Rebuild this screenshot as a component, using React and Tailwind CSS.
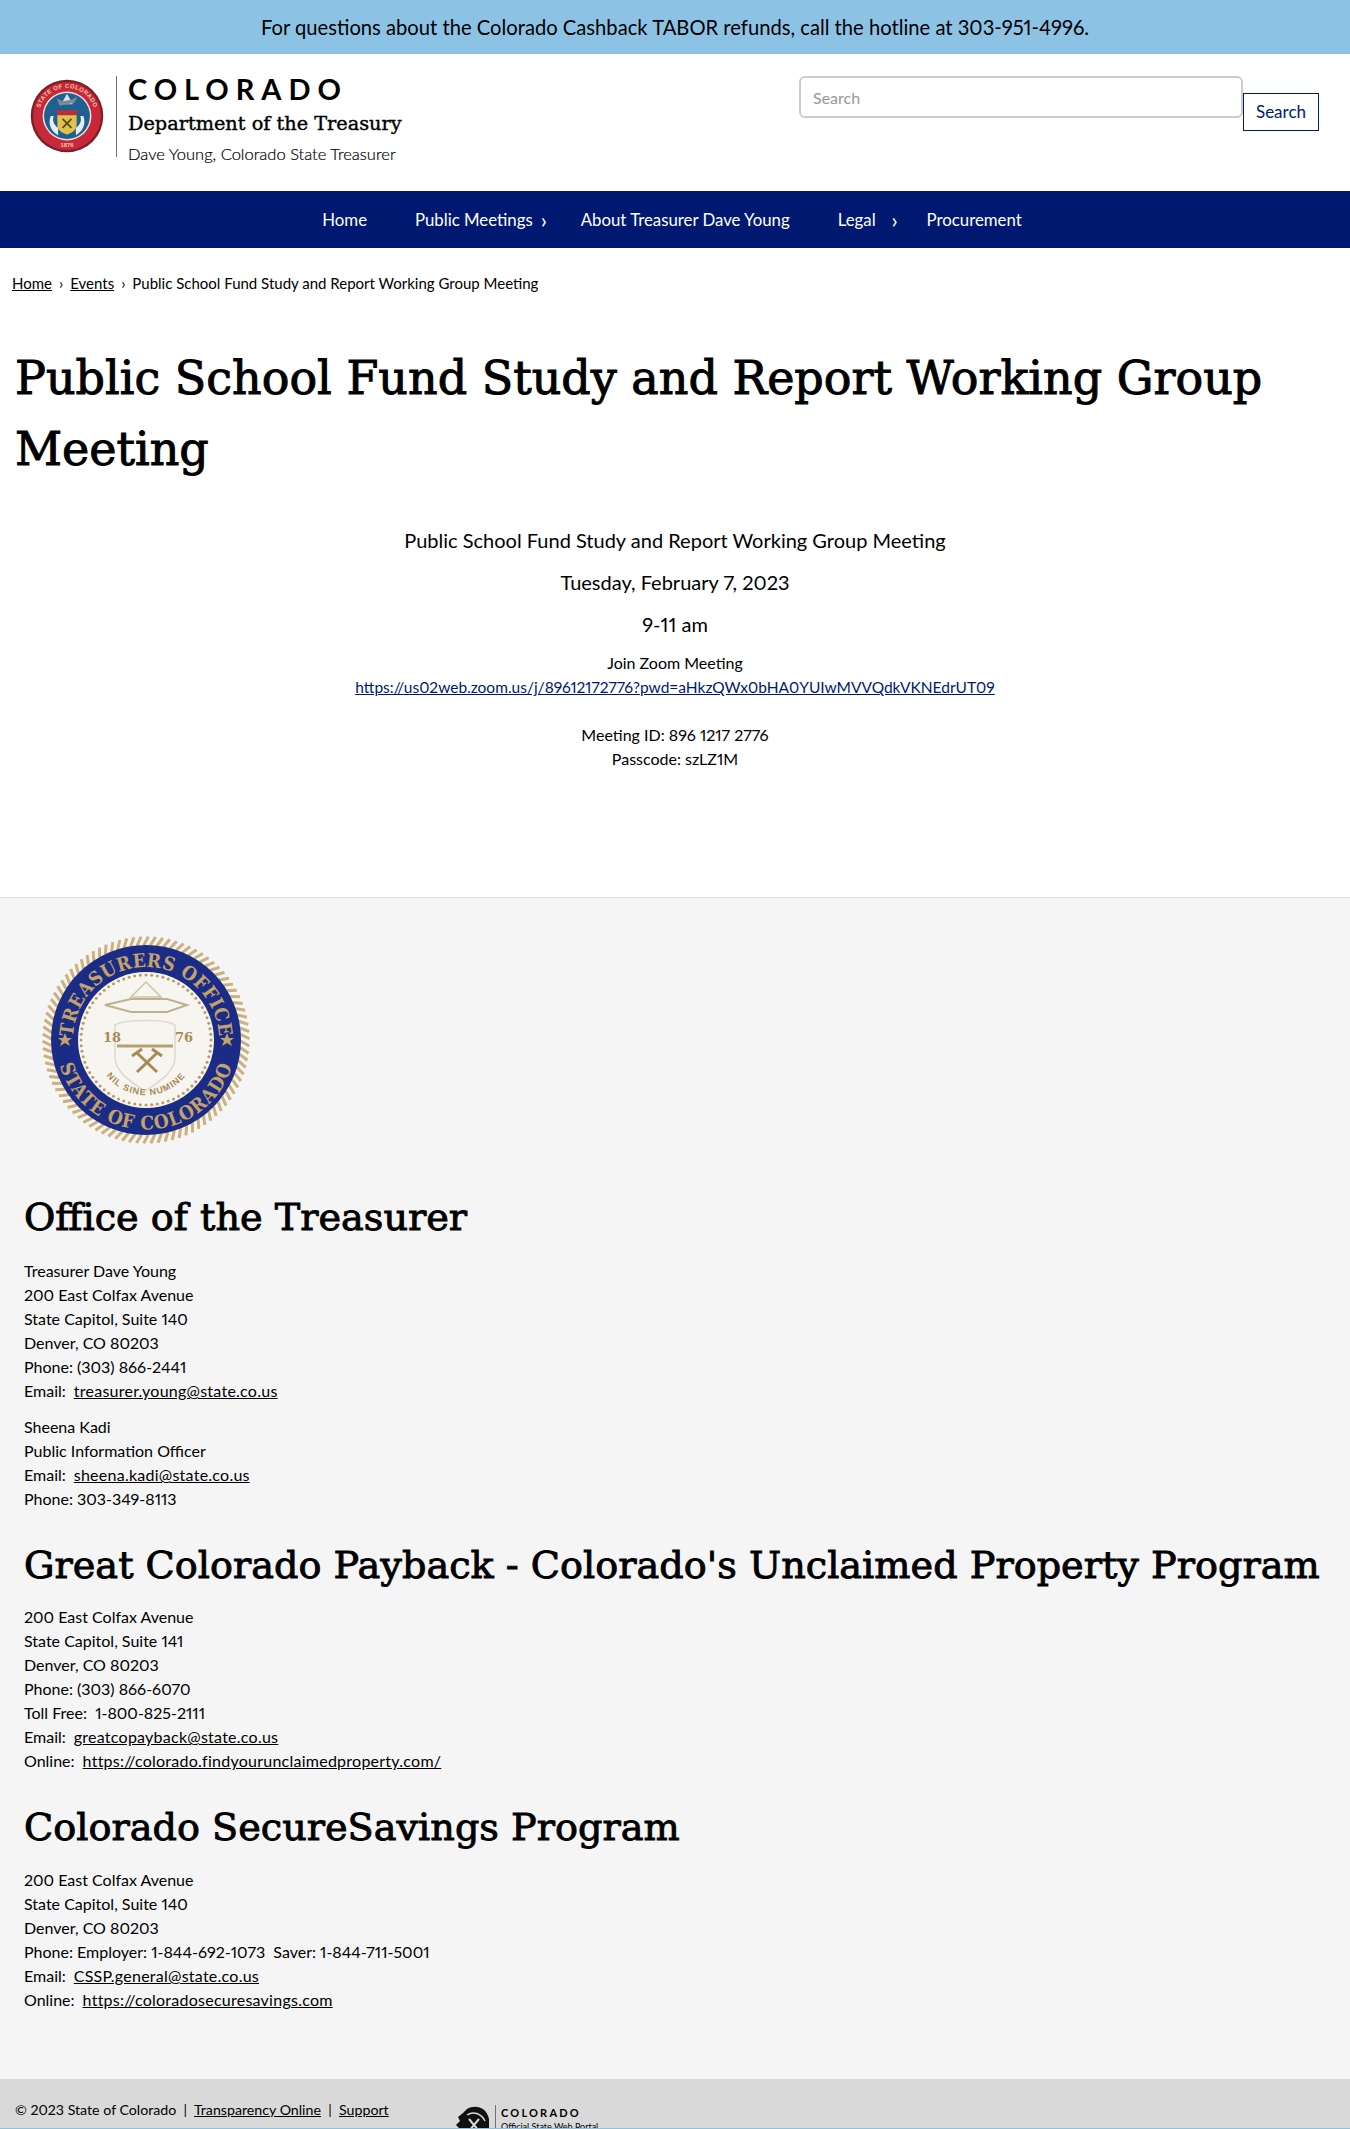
import React from 'react';

const body = { fontFamily: 'Lato, sans-serif' };
const slab = { fontFamily: '"DejaVu Serif", serif' };
const slabCond = { fontFamily: '"DejaVu Serif Condensed", "DejaVu Serif", serif' };

const Crumb = ({ children }) => <a className="underline text-black">{children}</a>;
const MailLink = ({ children }) => <a className="underline tracking-[0.25px] ml-[8px]">{children}</a>;

const StateSeal = () => (
  <svg width="74" height="74" viewBox="0 0 100 100">
    <circle cx="50" cy="50" r="49" fill="#7a1f25" />
    <circle cx="50" cy="50" r="46" fill="#c8283a" />
    <circle cx="50" cy="50" r="33" fill="#e9e4d6" />
    <circle cx="50" cy="50" r="31" fill="#1f5f92" />
    <path d="M50 20 L58 34 L42 34 Z" fill="#dfe3e8" />
    <path d="M40 36 L60 32 L64 24 L56 28 L44 30 L36 26 Z" fill="#7a8a96" />
    <rect x="36" y="42" width="28" height="7" fill="#b4303c" />
    <path d="M37 49 H63 V62 C63 70 55 73 50 75 C45 73 37 70 37 62 Z" fill="#e3c24a" />
    <path d="M44 54 L56 66 M56 54 L44 66" stroke="#5a4a20" strokeWidth="2.5" />
    <path d="M28 50 C24 60 28 70 38 76 L38 66 C32 62 30 56 32 50 Z" fill="#e6eef2" />
    <path d="M72 50 C76 60 72 70 62 76 L62 66 C68 62 70 56 68 50 Z" fill="#e6eef2" />
    <path id="ss-top" d="M12 50 A38 38 0 0 1 88 50" fill="none" />
    <text fontSize="8" fontWeight="700" fill="#f1c9a8" letterSpacing="0.6" style={{ fontFamily: '"Liberation Sans", sans-serif' }}>
      <textPath href="#ss-top" startOffset="50%" textAnchor="middle">STATE OF COLORADO</textPath>
    </text>
    <text x="50" y="92" textAnchor="middle" fontSize="8" fontWeight="700" fill="#f1c9a8" style={{ fontFamily: '"Liberation Sans", sans-serif' }}>1876</text>
  </svg>
);

const TreasurerSeal = () => {
  const dots = Array.from({ length: 72 }, (_, i) => (i / 72) * Math.PI * 2);
  const rope = Array.from({ length: 90 }, (_, i) => (i / 90) * 360);
  return (
    <svg width="210" height="210" viewBox="0 0 210 210">
      {rope.map((a) => (
        <rect key={a} x="103.5" y="1" width="3" height="10" fill="#cdb07c" transform={`rotate(${a} 105 105) rotate(28 105 6)`} />
      ))}
      <circle cx="105" cy="105" r="95" fill="#1b2c86" />
      <circle cx="105" cy="105" r="68" fill="#f7f5ef" />
      {dots.map((a, i) => (
        <circle key={i} cx={105 + 65 * Math.cos(a)} cy={105 + 65 * Math.sin(a)} r="1.5" fill="#b99a68" />
      ))}
      <path id="ts-top" d="M36.4 130 A73 73 0 1 1 173.6 130" fill="none" />
      <path id="ts-bot" d="M20.4 74 A90 90 0 1 0 189.6 74" fill="none" />
      <text fontSize="19" fontWeight="700" fill="#c4a26a" letterSpacing="0.5" style={slabCond}>
        <textPath href="#ts-top" startOffset="50%" textAnchor="middle">TREASURERS OFFICE</textPath>
      </text>
      <text fontSize="19" fontWeight="700" fill="#c4a26a" letterSpacing="1" style={slabCond}>
        <textPath href="#ts-bot" startOffset="50%" textAnchor="middle">STATE OF COLORADO</textPath>
      </text>
      <path d="M24 98 l2 5 5 0 -4 3 2 5 -5 -3 -5 3 2 -5 -4 -3 5 0 Z" fill="#c4a26a" />
      <path d="M186 98 l2 5 5 0 -4 3 2 5 -5 -3 -5 3 2 -5 -4 -3 5 0 Z" fill="#c4a26a" />
      <path d="M105 47 L120 62 H90 Z" fill="none" stroke="#cfc4ab" strokeWidth="1.5" />
      <path d="M64 70 L90 64 H126 L146 70 L126 77 H90 Z" fill="none" stroke="#bfb08f" strokeWidth="2" />
      <path d="M74 90 C84 84 124 84 134 90 V122 C134 138 116 148 104 156 C92 148 74 138 74 122 Z" fill="none" stroke="#e0d9c8" strokeWidth="1.5" />
      <path d="M76 111 H132" stroke="#b79f70" strokeWidth="3" />
      <path d="M96 118 L116 137 M116 118 L96 137 M91 121 L101 114 M111 114 L121 121" stroke="#a88a58" strokeWidth="3" />
      <text x="62" y="107" fontSize="13" fontWeight="700" fill="#a88a58" style={slab}>18</text>
      <text x="134" y="107" fontSize="13" fontWeight="700" fill="#a88a58" style={slab}>76</text>
      <path id="ts-motto" d="M60 132 A50 50 0 0 0 150 132" fill="none" />
      <text fontSize="9" fontWeight="700" fill="#a88a58" letterSpacing="1" style={{ fontFamily: '"Liberation Sans", sans-serif' }}>
        <textPath href="#ts-motto" startOffset="50%" textAnchor="middle">NIL SINE NUMINE</textPath>
      </text>
    </svg>
  );
};

const PortalMark = () => (
  <svg width="36" height="32" viewBox="0 0 36 32">
    <path d="M3 12 L8 8 L12 4 C20 -1 32 2 34 14 L34 32 H2 L5 24 L1 20 L5 16 Z" fill="#111" />
    <path d="M14 14 L24 26 M24 14 L14 26" stroke="#d9d9d9" strokeWidth="2" />
    <path d="M12 10 C18 6 26 8 30 16" stroke="#d9d9d9" strokeWidth="1.5" fill="none" />
  </svg>
);

const FooterTitle = ({ children }) => (
  <h2 className="text-[38.2px] leading-[48px] font-normal text-black [-webkit-text-stroke:0.9px_black] whitespace-nowrap" style={slab}>{children}</h2>
);

export default function App() {
  return (
    <div className="w-[1350px] h-[2129px] overflow-hidden bg-white text-black text-[16px] leading-6 proportional-nums" style={body}>
      {/* Alert banner */}
      <div className="h-[54px] bg-[#8cc3e5] flex items-center justify-center text-[20.2px]">
        For questions about the Colorado Cashback TABOR refunds, call the hotline at 303-951-4996.
      </div>

      {/* Header */}
      <header className="h-[137px] flex justify-between pt-[22px] pl-[30px] pr-[31px]">
        <div className="flex items-start">
          <div className="pt-[3px]"><StateSeal /></div>
          <div className="ml-[12px] border-l border-gray-500 pl-[11px] h-[81px]">
            <div className="text-[29px] leading-[26px] font-bold tracking-[0.24em]">COLORADO</div>
            <div className="mt-[8px] text-[19.3px] leading-[28px] font-normal [-webkit-text-stroke:0.4px_black]" style={slab}>Department of the Treasury</div>
            <div className="mt-[4px] text-[16.5px] leading-[24px] font-light [-webkit-text-stroke:0.2px_black]">Dave Young, Colorado State Treasurer</div>
          </div>
        </div>
        <div className="flex items-start">
          <input
            placeholder="Search"
            className="w-[444px] h-[42px] border-2 border-[#cccccc] rounded-md px-3 placeholder:text-[#999999] outline-none"
          />
          <button className="mt-[17px] h-[38px] w-[76px] border border-[#001970] text-[#001970] text-[17px]">Search</button>
        </div>
      </header>

      {/* Main nav */}
      <nav className="h-[57px] bg-[#001970] text-white text-[16.8px] flex items-center justify-center pr-[6px]">
        <a className="mr-[48px]">Home</a>
        <a>Public Meetings</a>
        <span className="w-[48px] pl-[8px] text-[22px] leading-none">›</span>
        <a className="mr-[48px]">About Treasurer Dave Young</a>
        <a>Legal</a>
        <span className="w-[51px] pl-[16px] text-[22px] leading-none">›</span>
        <a>Procurement</a>
      </nav>

      {/* Breadcrumb */}
      <div className="px-3 pt-[23px] text-[15px] flex gap-[7px]">
        <Crumb>Home</Crumb><span>›</span><Crumb>Events</Crumb><span>›</span>
        <span>Public School Fund Study and Report Working Group Meeting</span>
      </div>

      {/* Page content */}
      <main className="h-[602px] px-[15px] pt-[48px]">
        <h1 className="text-[46px] leading-[71px] font-normal [-webkit-text-stroke:1px_black]" style={slab}>
          Public School Fund Study and Report Working Group Meeting
        </h1>
        <div className="mt-[40px] text-center">
          <p className="text-[20px] leading-[30px] mb-[12px]">Public School Fund Study and Report Working Group Meeting</p>
          <p className="text-[20px] leading-[30px] mb-[12px]">Tuesday, February 7, 2023</p>
          <p className="text-[20px] leading-[30px] mb-[12px]">9-11 am</p>
          <p>Join Zoom Meeting<br /><a className="underline text-[#001970] text-[15.5px]">https://us02web.zoom.us/j/89612172776?pwd=aHkzQWx0bHA0YUIwMVVQdkVKNEdrUT09</a></p>
          <p className="mt-[24px]">Meeting ID: 896 1217 2776<br />Passcode: szLZ1M</p>
        </div>
      </main>

      {/* Footer */}
      <footer className="bg-[#f5f5f5] border-t border-[#dddddd] h-[1232px] flex flex-col">
        <div className="px-6 flex-1">
          <div className="pt-[37px] pl-[17px]"><TreasurerSeal /></div>

          <div className="mt-[48px]"><FooterTitle>Office of the Treasurer</FooterTitle></div>
          <p className="mt-[18px]">Treasurer Dave Young<br />200 East Colfax Avenue<br />State Capitol, Suite 140<br />Denver, CO 80203<br />Phone: (303) 866-2441<br />Email:<MailLink>treasurer.young@state.co.us</MailLink></p>
          <p className="mt-[12px]">Sheena Kadi<br />Public Information Officer<br />Email:<MailLink>sheena.kadi@state.co.us</MailLink><br />Phone: 303-349-8113</p>

          <div className="mt-[30px]"><FooterTitle>Great Colorado Payback - Colorado's Unclaimed Property Program</FooterTitle></div>
          <p className="mt-[16px]">200 East Colfax Avenue<br />State Capitol, Suite 141<br />Denver, CO 80203<br />Phone: (303) 866-6070<br />Toll Free:&nbsp; 1-800-825-2111<br />Email:<MailLink>greatcopayback@state.co.us</MailLink><br />Online:<MailLink>https://colorado.findyourunclaimedproperty.com/</MailLink></p>

          <div className="mt-[30px]"><FooterTitle>Colorado SecureSavings Program</FooterTitle></div>
          <p className="mt-[17px]">200 East Colfax Avenue<br />State Capitol, Suite 140<br />Denver, CO 80203<br />Phone: Employer: 1-844-692-1073&nbsp; Saver: 1-844-711-5001<br />Email:<MailLink>CSSP.general@state.co.us</MailLink><br />Online:<MailLink>https://coloradosecuresavings.com</MailLink></p>
        </div>

        {/* Bottom bar */}
        <div className="h-[50px] bg-[#d9d9d9] border-b border-[#8cc3e5] flex items-start pt-[21px] pl-[15px] text-[14.2px] leading-5 overflow-hidden">
          <span className="w-[440px]">© 2023 State of Colorado&nbsp; |&nbsp; <a className="underline">Transparency Online</a>&nbsp; |&nbsp; <a className="underline">Support</a></span>
          <div className="flex items-start mt-[5px]">
            <PortalMark />
            <div className="ml-[4px] border-l border-gray-500 pl-[5px] h-[32px]">
              <div className="text-[11px] leading-[16px] font-bold tracking-[0.2em]">COLORADO</div>
              <div className="text-[9px] leading-[12px]">Official State Web Portal</div>
            </div>
          </div>
        </div>
      </footer>
    </div>
  );
}
